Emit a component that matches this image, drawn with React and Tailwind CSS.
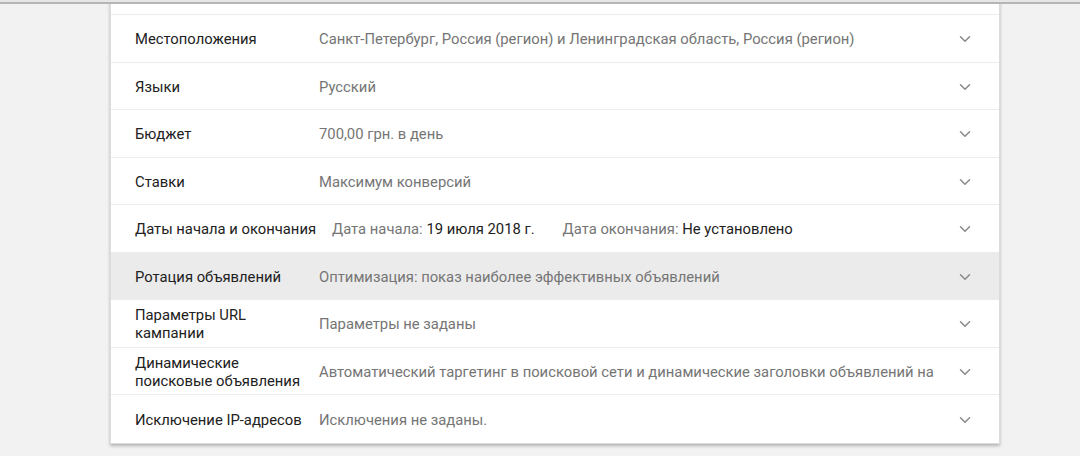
import { ChevronDown } from "lucide-react";

const rows = [
    { label: "Местоположения", value: "Санкт-Петербург, Россия (регион) и Ленинградская область, Россия (регион)" },
    { label: "Языки", value: "Русский" },
    { label: "Бюджет", value: "700,00 грн. в день" },
    { label: "Ставки", value: "Максимум конверсий" },
    { label: "Даты начала и окончания", dates: true },
    { label: "Ротация объявлений", value: "Оптимизация: показ наиболее эффективных объявлений", active: true },
    { label: ["Параметры URL", "кампании"], value: "Параметры не заданы" },
    { label: ["Динамические", "поисковые объявления"], value: "Автоматический таргетинг в поисковой сети и динамические заголовки объявлений на" },
    { label: "Исключение IP-адресов", value: "Исключения не заданы.", last: true },
];

const Row = ({ row }) => (
    <div
        className={`h-[47.5px] flex items-center pl-6 pr-[22px] pt-[2px] ${row.last ? "" : "border-b border-[#ececec]"} ${
            row.active ? "bg-[#ebebeb]" : "bg-white"
        }`}
    >
        <div className="min-w-[168px] mr-4 text-[#212121] leading-[18px] whitespace-nowrap">
            {Array.isArray(row.label) ? (
                <>
                    {row.label[0]}
                    <br />
                    {row.label[1]}
                </>
            ) : (
                row.label
            )}
        </div>
        <div className="flex-1 text-[#757575] whitespace-nowrap overflow-hidden">
            {row.dates ? (
                <>
                    Дата начала: <span className="text-[#212121]">19 июля 2018 г.</span>
                    <span className="ml-7">Дата окончания: </span>
                    <span className="text-[#212121]">Не установлено</span>
                </>
            ) : (
                row.value
            )}
        </div>
        <div className="w-6 h-6 ml-4 flex items-center justify-center text-[#8a8a8a]">
            <ChevronDown size={18} strokeWidth={2} />
        </div>
    </div>
);

const App = () => {
    return (
        <div className="w-[1080px] h-[456px] bg-[#f2f2f2] overflow-hidden relative text-[14.8px]" style={{ fontFamily: "Roboto, sans-serif" }}>
            <div className="absolute top-0 left-0 w-full h-[4px] bg-[#e6e6e6] border-b-2 border-[#b5b5b5] z-10" />
            <div className="ml-[110px] w-[890px] mt-[-32px] bg-white border border-[#dcdcdc] shadow-[0_2px_3px_rgba(0,0,0,0.25)]">
                <div className="h-[46px] border-b border-[#ececec]" />
                {rows.map((row, i) => (
                    <Row key={i} row={row} />
                ))}
            </div>
        </div>
    );
};

export default App;
